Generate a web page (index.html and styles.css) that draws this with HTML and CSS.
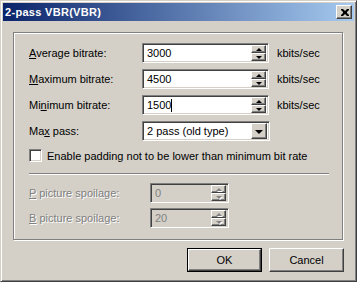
FILE: index.html
```html
<!DOCTYPE html>
<html>
<head>
<meta charset="utf-8">
<link rel="stylesheet" href="styles.css">
</head>
<body>
<div class="window">
  <div class="titlebar">
    <span class="title">2-pass VBR(VBR)</span>
    <span class="close raised">
      <svg width="8" height="7" viewBox="0 0 8 7"><path d="M0 0h2l2 2 2-2h2v1l-2 2v1l2 2v1h-2l-2-2-2 2h-2v-1l2-2v-1l-2-2z" fill="#000"/></svg>
    </span>
  </div>
  <div class="body">
    <div class="group">
      <div class="grid">
        <label class="lbl"><u>A</u>verage bitrate:</label>
        <div class="field sunken"><span class="val">3000</span><span class="spin"><span class="sb raised"><i class="up"></i></span><span class="sb raised"><i class="dn"></i></span></span></div>
        <span class="unit">kbits/sec</span>

        <label class="lbl"><u>M</u>aximum bitrate:</label>
        <div class="field sunken"><span class="val">4500</span><span class="spin"><span class="sb raised"><i class="up"></i></span><span class="sb raised"><i class="dn"></i></span></span></div>
        <span class="unit">kbits/sec</span>

        <label class="lbl">Mi<u>n</u>imum bitrate:</label>
        <div class="field sunken"><span class="val">1500<span class="caret"></span></span><span class="spin"><span class="sb raised"><i class="up"></i></span><span class="sb raised"><i class="dn"></i></span></span></div>
        <span class="unit">kbits/sec</span>

        <label class="lbl">Ma<u>x</u> pass:</label>
        <div class="field sunken combo"><span class="val">2 pass (old type)</span><span class="ddbtn raised"><i class="dd"></i></span></div>
        <span></span>
      </div>
      <div class="check">
        <span class="box sunken"></span>
        <span>Enable padding not to be lower than minimum bit rate</span>
      </div>
      <div class="sep"></div>
      <div class="grid2">
        <label class="lbl dis"><u>P</u> picture spoilage:</label>
        <div class="field sunken disf"><span class="val">0</span><span class="spin"><span class="sb raised"><i class="up g"></i></span><span class="sb raised"><i class="dn g"></i></span></span></div>
        <label class="lbl dis"><u>B</u> picture spoilage:</label>
        <div class="field sunken disf"><span class="val">20</span><span class="spin"><span class="sb raised"><i class="up g"></i></span><span class="sb raised"><i class="dn g"></i></span></span></div>
      </div>
    </div>
    <div class="buttons">
      <button class="btn default"><span class="raised inner">OK</span></button>
      <button class="btn"><span class="raised inner">Cancel</span></button>
    </div>
  </div>
</div>
</body>
</html>
```
FILE: styles.css
```css
* { box-sizing: border-box; }
html, body { margin: 0; padding: 0; }
body {
  width: 357px; height: 282px; overflow: hidden;
  font-family: "Liberation Sans", Arial, sans-serif;
  font-size: 11px; color: #000;
  background: #D4D0C8;
}
.window {
  width: 357px; height: 282px;
  background: #D4D0C8;
  border: 1px solid; border-color: #D4D0C8 #404040 #404040 #D4D0C8;
  box-shadow: inset 1px 1px #fff, inset -1px -1px #808080;
  padding: 2px;
}
.raised {
  border: 1px solid; border-color: #fff #404040 #404040 #fff;
  box-shadow: inset -1px -1px #808080, inset 1px 1px #D4D0C8;
  background: #D4D0C8;
}
.sunken {
  border: 1px solid; border-color: #808080 #fff #fff #808080;
  box-shadow: inset 1px 1px #404040, inset -1px -1px #D4D0C8;
  background: #fff;
}
.titlebar {
  height: 18px;
  background: linear-gradient(to right, #0A246A, #A6CAF0);
  display: flex; align-items: center; justify-content: space-between;
  padding: 0 2px 0 2px;
}
.title { color: #fff; font-weight: bold; font-size: 11px; letter-spacing: 0.3px; }
.close {
  width: 16px; height: 14px;
  display: flex; align-items: center; justify-content: center;
  padding: 0 0 0 1px;
}
.close svg { display: block; }
.body { padding: 11px 0 0 10px; }
.group {
  width: 330px; height: 208px;
  border: 1px solid #808080;
  box-shadow: inset 1px 1px #fff, 1px 1px #fff;
  padding: 10px 0 0 15px;
}
.grid {
  display: grid;
  grid-template-columns: 105px 127px auto;
  column-gap: 8px; row-gap: 6px;
  align-items: center;
}
.lbl { display: block; line-height: 13px; }
.lbl u { text-decoration: underline; }
.field {
  height: 20px; display: flex; align-items: center;
  padding: 2px;
}
.val { flex: 1; padding-left: 2px; line-height: 14px; display: flex; align-items: center; }
.caret { display: inline-block; width: 1px; height: 13px; background: #000; }
.spin { width: 15px; height: 16px; display: flex; flex-direction: column; }
.sb { height: 8px; display: flex; align-items: center; justify-content: center; }
.up, .dn, .dd { display: block; width: 0; height: 0; border-left: 3px solid transparent; border-right: 3px solid transparent; }
.up { border-bottom: 3px solid #000; }
.dn { border-top: 3px solid #000; }
.up.g { border-bottom-color: #808080; filter: drop-shadow(1px 1px 0 #fff); }
.dn.g { border-top-color: #808080; filter: drop-shadow(1px 1px 0 #fff); }
.unit { line-height: 13px; }
.combo { width: 128px; }
.ddbtn { width: 16px; height: 16px; display: flex; align-items: center; justify-content: center; }
.dd { border-left-width: 4px; border-right-width: 4px; border-top: 4px solid #000; margin-top: 1px; }
.check {
  display: flex; align-items: center; gap: 5px;
  margin-top: 8px; height: 13px;
}
.box { width: 13px; height: 13px; flex: none; }
.sep {
  width: 300px; height: 2px; margin-top: 11px;
  border-top: 1px solid #808080; border-bottom: 1px solid #fff;
}
.grid2 {
  display: grid;
  grid-template-columns: 121px 79px;
  row-gap: 5px; align-items: center;
  margin-top: 8px;
}
.dis { color: #808080; text-shadow: 1px 1px 0 #fff; }
.disf { background: #D4D0C8; color: #808080; }
.buttons {
  display: flex; justify-content: flex-end; gap: 7px;
  margin-top: 8px; padding-right: 10px;
}
.btn {
  width: 75px; height: 24px; padding: 0; margin: 0;
  border: 0; background: #D4D0C8;
  font: inherit; color: #000;
  display: flex;
}
.btn .inner { flex: 1; display: flex; align-items: center; justify-content: center; }
.btn.default { border: 1px solid #000; }
```
